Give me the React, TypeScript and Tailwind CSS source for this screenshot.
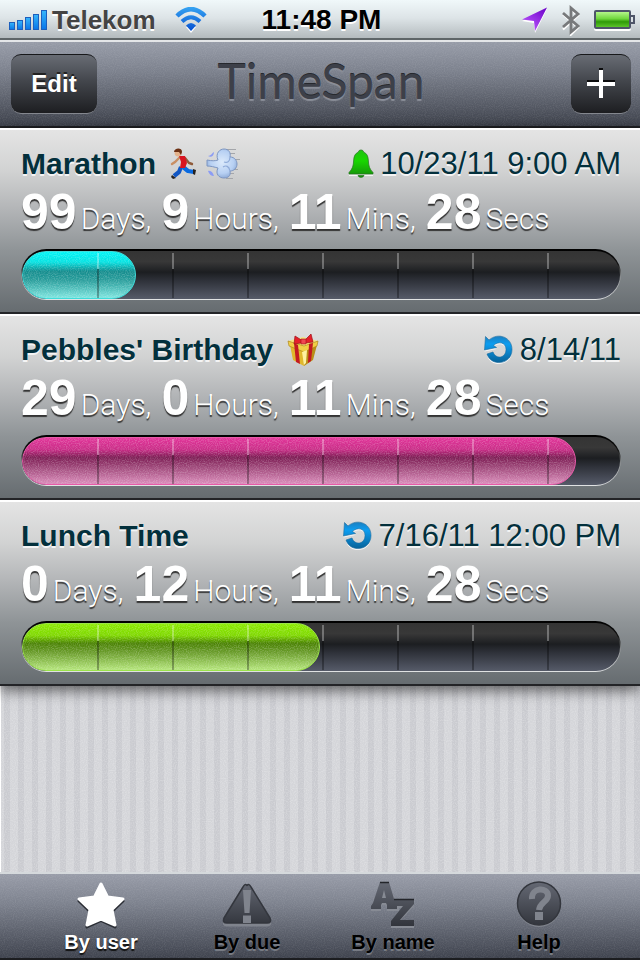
import { ReactNode } from "react";

type Unit = { value: number; label: string };

type Span = {
  title: string;
  emoji?: ReactNode;
  icon: ReactNode;
  date: string;
  units: Unit[];
  percent: number;
  fill: string;
};

const engraved = "[text-shadow:0_2px_0_#f4f4f4]";

function Grain({ id, className }: { id: string; className: string }) {
  return (
    <svg className={`pointer-events-none absolute inset-0 h-full w-full ${className}`} aria-hidden="true">
      <filter id={id} x="0" y="0" width="100%" height="100%">
        <feTurbulence type="fractalNoise" baseFrequency="0.9" numOctaves="1" />
        <feColorMatrix type="matrix" values="0 0 0 0 1  0 0 0 0 1  0 0 0 0 1  3 0 0 0 -1.2" />
      </filter>
      <rect width="100%" height="100%" filter={`url(#${id})`} />
    </svg>
  );
}

function Runner() {
  return (
    <svg width="28" height="32" viewBox="0 0 28 32" aria-label="runner">
      <path d="M10 9 L5 14 L2 16" stroke="#c98f63" strokeWidth="2.4" fill="none" strokeLinecap="round" />
      <path d="M15 10 L19 15 L22 16" stroke="#8f5b3a" strokeWidth="2.4" fill="none" strokeLinecap="round" />
      <path d="M11 19 L9 24 L4 28" stroke="#1257c4" strokeWidth="4.2" fill="none" strokeLinejoin="round" />
      <path d="M13 19 L18 23 L24 24" stroke="#0a6ae0" strokeWidth="4.2" fill="none" strokeLinejoin="round" />
      <path d="M2 27 L6 30 L3 31 L1 29 Z M23 21 L26 22 L25 27 L23 26 Z" fill="#26221f" />
      <path d="M9 8 L15 8 L17 15 L15 20 L10 20 L11 14 Z" fill="#d81420" />
      <circle cx="8" cy="5" r="3.4" fill="#e3b18a" />
      <path d="M4 4 C4 0 12 -1 12 4 L11 7 L9 4 Z" fill="#6b2f12" />
    </svg>
  );
}

function Dash() {
  return (
    <svg width="34" height="32" viewBox="0 0 34 32" aria-label="dash">
      <defs>
        <radialGradient id="cloud" cx="0.5" cy="0.45" r="0.6">
          <stop offset="0" stopColor="#dceafb" />
          <stop offset="0.65" stopColor="#b7d0f3" />
          <stop offset="1" stopColor="#86a3d0" />
        </radialGradient>
      </defs>
      <path d="M20 1.500 H30 M24 5.500 H29 M27 11.500 H34 M28 21.500 H32 M24 25.500 H28 M20 30.500 H27" stroke="#a4a6aa" strokeWidth="1" />
      <path d="M1 12 C6 13 9 13 12 12 C9 5 14 1 18 1 C23 1 25 5 24 9 C29 9 31 13 31 16 C31 20 28 23 24 23 C25 28 22 30 18 30 C13 30 9 26 12 20 C8 19 5 18 1 18 Z" fill="url(#cloud)" stroke="#7d96c2" strokeWidth="1" />
      <path d="M24 9 C24 14 21 15 18 14 M24 23 C23 18 20 17 17 19" stroke="#8fabd8" strokeWidth="1.2" fill="none" />
      <path d="M2 8 C5 8 6 5 8 4 C8 8 5 10 2 8 Z M2 23 C5 22 7 25 8 28 C5 28 3 26 2 23 Z" fill="#8b9cf4" />
    </svg>
  );
}

function Gift() {
  return (
    <svg width="32" height="34" viewBox="0 0 32 34" aria-label="gift">
      <path d="M3 12 L16 17 L17 33 L6 27 Z" fill="#e0b82c" />
      <path d="M17 17 L30 12 L26 27 L17 33 Z" fill="#b98e16" />
      <path d="M1 8 L16 4 L31 8 L17 16 Z" fill="#f7e680" />
      <path d="M1 8 L17 13 L31 8 L30 13 L17 19 L2 13 Z" fill="#f0cf45" stroke="#a67c12" strokeWidth="0.6" />
      <path d="M7 10 L11 12 L13 31 L9 29 Z M22 11 L26 10 L24 28 L21 30 Z" fill="#c31a22" />
      <path d="M15 19 L20 17 L19 30 L17 32 Z" fill="#fff1a0" />
      <path d="M16 8 L8 3 L7 11 L14 10 Z M17 8 L24 1 L26 9 L19 10 Z" fill="#e5202a" stroke="#9d0f18" strokeWidth="0.7" />
      <path d="M14 6 H19 V11 H14 Z" fill="#f04850" stroke="#9d0f18" strokeWidth="0.6" />
    </svg>
  );
}

function Bell() {
  return (
    <svg width="26" height="30" viewBox="0 0 26 30" aria-label="alarm">
      <defs>
        <linearGradient id="bell" x1="0" y1="0" x2="0" y2="1">
          <stop offset="0" stopColor="#1fc410" />
          <stop offset="0.4" stopColor="#19d600" />
          <stop offset="1" stopColor="#168a0c" />
        </linearGradient>
      </defs>
      <path d="M1 25.5 H25 V27 H16 Q13 31 10 27 H1 Z" fill="#f4f4f4" />
      <path d="M13 1 C14.500 1 15.500 1.800 15.700 3.200 C19 4.500 20 7 20.300 11 C20.600 17 21.500 20 25 23.500 V25 H1 V23.500 C4.500 20 5.400 17 5.700 11 C6 7 7 4.500 10.300 3.200 C10.500 1.800 11.500 1 13 1 Z M10 26.500 H16 C15.500 29 10.500 29 10 26.500 Z" fill="url(#bell)" stroke="#23731c" strokeWidth="0.7" />
    </svg>
  );
}

function Repeat({ id }: { id: string }) {
  const body =
    "M5 5 C14 -3 28 2 28 14.500 C28 30 7 32 3 19 L9 17 C12 25 22 23 22 14.500 C22 7 14 6 9.500 10.500 L12.500 12.500 L0.500 15 L1.500 1.500 Z";
  return (
    <svg width="30" height="30" viewBox="0 0 30 30" aria-label="repeats">
      <defs>
        <linearGradient id={id} x1="0" y1="0" x2="0" y2="1">
          <stop offset="0" stopColor="#1b7fc0" />
          <stop offset="0.3" stopColor="#0d9df0" />
          <stop offset="1" stopColor="#066299" />
        </linearGradient>
      </defs>
      <path d={body} transform="translate(0 1.5)" fill="#f6f6f6" />
      <path d={body} fill={`url(#${id})`} stroke="#1b6a9c" strokeWidth="0.6" />
    </svg>
  );
}

const spans: Span[] = [
  {
    title: "Marathon",
    emoji: (
      <>
        <Runner />
        <Dash />
      </>
    ),
    icon: <Bell />,
    date: "10/23/11 9:00 AM",
    units: [
      { value: 99, label: "Days," },
      { value: 9, label: "Hours," },
      { value: 11, label: "Mins," },
      { value: 28, label: "Secs" },
    ],
    percent: 19,
    fill: "border-[#3fdcda] bg-[linear-gradient(#00f6f6_0%,#06e2e2_22%,#138c8d_42%,#2b9f9d_62%,#7fe6e0_100%)]",
  },
  {
    title: "Pebbles' Birthday",
    emoji: <Gift />,
    icon: <Repeat id="repeat-birthday" />,
    date: "8/14/11",
    units: [
      { value: 29, label: "Days," },
      { value: 0, label: "Hours," },
      { value: 11, label: "Mins," },
      { value: 28, label: "Secs" },
    ],
    percent: 92.7,
    fill: "border-[#e75aa8] bg-[linear-gradient(#e2359a_0%,#c92d87_25%,#7d1d54_42%,#9c4577_62%,#db8dbb_100%)]",
  },
  {
    title: "Lunch Time",
    icon: <Repeat id="repeat-lunch" />,
    date: "7/16/11 12:00 PM",
    units: [
      { value: 0, label: "Days," },
      { value: 12, label: "Hours," },
      { value: 11, label: "Mins," },
      { value: 28, label: "Secs" },
    ],
    percent: 49.8,
    fill: "border-[#9be34a] bg-[linear-gradient(#8bea00_0%,#7fd800_25%,#4a8203_42%,#6b9d2c_62%,#b5e67c_100%)]",
  },
];

function ProgressBar({ name, percent, fill, id }: { name: string; percent: number; fill: string; id: string }) {
  return (
    <div
      role="progressbar"
      aria-label={name}
      aria-valuenow={percent}
      className="rounded-full bg-[linear-gradient(#000_0%,#111_30%,#8d9092_55%,#e2e4e5_100%)] px-px pt-[2px] pb-px"
    >
      <div className="relative h-12 overflow-hidden rounded-full bg-[linear-gradient(#343434_0%,#383838_22%,#1c1e21_44%,#2f323a_62%,#565b69_100%)]">
        <div className={`relative h-full overflow-hidden rounded-full border ${fill}`} style={{ width: `${percent}%` }}>
          <Grain id={id} className="opacity-20" />
        </div>
        <div className="absolute top-[2px] -right-1 bottom-px left-[2px] grid grid-cols-8">
          {[1, 2, 3, 4, 5, 6, 7].map((n) => (
            <div key={n} className="flex flex-col items-end">
              <div className="h-4 w-[2px] bg-white/30" />
              <div className="w-[2px] flex-1 bg-black/30" />
            </div>
          ))}
        </div>
      </div>
    </div>
  );
}

function SpanRow({ span, index }: { span: Span; index: number }) {
  return (
    <li className="border-t-2 border-b-2 border-t-white border-b-[#232427] bg-[linear-gradient(#e4e4e4_0%,#d2d3d3_22%,#b5b7b9_42%,#8f9497_66%,#666c70_100%)] pt-4 pr-[19px] pb-3 pl-[21px]">
      <div className="flex h-9 items-center text-[#03303c]">
        <h2 className={`text-[30px] leading-9 font-bold ${engraved}`}>{span.title}</h2>
        <div className="ml-[14px] flex items-center gap-2">{span.emoji}</div>
        <div className="ml-auto flex items-center gap-[6px]">
          {span.icon}
          <span className={`text-[31px] leading-9 ${engraved}`}>{span.date}</span>
        </div>
      </div>
      <div className="mt-px mb-2 flex h-[58px] items-baseline gap-[10px] text-white [text-shadow:0_2px_1px_#333]">
        {span.units.map((u) => (
          <span key={u.label} className="flex items-baseline gap-1">
            <b className="text-[50px] leading-[58px]">{u.value}</b>
            <span className="font-['Roboto','Liberation_Sans',sans-serif] text-[30px] font-light">{u.label}</span>
          </span>
        ))}
      </div>
      <ProgressBar name={span.title} percent={span.percent} fill={span.fill} id={`grain-${index}`} />
    </li>
  );
}

function StatusBar() {
  return (
    <div className="grid h-[42px] grid-cols-[1fr_auto_1fr] items-center border-b-2 border-[#e4e6e8] bg-[linear-gradient(#f0f8fa_0%,#dde4e7_45%,#b4bbbe_95%,#5f6668_96%,#5f6668_100%)] pr-[5px] pb-px pl-2">
      <div className="flex items-center gap-1">
        <svg width="40" height="24" viewBox="0 0 40 24" aria-label="signal">
          <defs>
            <linearGradient id="sig" x1="0" y1="0" x2="0" y2="1">
              <stop offset="0" stopColor="#37b6fb" />
              <stop offset="1" stopColor="#0875e8" />
            </linearGradient>
          </defs>
          <g fill="url(#sig)" stroke="#1d5fbd" strokeWidth="1">
            <rect x="1.500" y="14.500" width="5" height="7" />
            <rect x="9.500" y="12.500" width="5" height="9" />
            <rect x="17.500" y="9.500" width="5" height="12" />
            <rect x="25.500" y="6.500" width="5" height="15" />
            <rect x="33.500" y="2.500" width="5" height="19" />
          </g>
        </svg>
        <span className="text-[26px] leading-8 font-bold text-[#444] [text-shadow:0_2px_0_#fff]">Telekom</span>
        <svg className="ml-[14px]" width="34" height="26" viewBox="0 0 34 26" fill="none" aria-label="wifi">
          <defs>
            <linearGradient id="wifi" gradientUnits="userSpaceOnUse" x1="0" y1="0" x2="0" y2="24">
              <stop offset="0" stopColor="#36a4f2" />
              <stop offset="1" stopColor="#0650d0" />
            </linearGradient>
          </defs>
          <path d="M17 26 L12 20 H22 Z" fill="#fff" />
          <path d="M3 9 Q17 -5 31 9" stroke="url(#wifi)" strokeWidth="4.500" />
          <path d="M8 14.500 Q17 6 26 14.500" stroke="url(#wifi)" strokeWidth="4" />
          <path d="M12 18.500 Q17 13.500 22 18.500 L17 24 Z" fill="url(#wifi)" />
        </svg>
      </div>
      <time className="text-[28px] leading-8 font-bold text-black [text-shadow:0_2px_0_#fff]">11:48 PM</time>
      <div className="flex items-center justify-end">
        <svg className="mr-3" width="28" height="28" viewBox="0 0 28 28" aria-label="location">
          <defs>
            <linearGradient id="loc" x1="1" y1="0" x2="0.200" y2="1">
              <stop offset="0" stopColor="#6a00c8" />
              <stop offset="1" stopColor="#c05cff" />
            </linearGradient>
          </defs>
          <path d="M26 3 L14 27 L13 17 L1 15 Z" fill="#fff" />
          <path d="M26 1.500 L14 25 L13 15 L1 13.500 Z" fill="url(#loc)" />
        </svg>
        <svg className="mr-3" width="20" height="32" viewBox="0 0 20 32" fill="none" aria-label="bluetooth">
          <path d="M2 9 L17 22 L10 29 V4 L17 10 L2 24" transform="translate(0 1.500)" stroke="#fff" strokeWidth="2.200" />
          <path d="M2 9 L17 22 L10 28 V4 L17 10 L2 23" stroke="#77797b" strokeWidth="2.800" />
        </svg>
        <svg width="42" height="24" viewBox="0 0 42 24" aria-label="battery">
          <defs>
            <linearGradient id="bat" x1="0" y1="0" x2="0" y2="1">
              <stop offset="0" stopColor="#b4f58a" />
              <stop offset="0.450" stopColor="#6fd63c" />
              <stop offset="0.650" stopColor="#2f9a08" />
              <stop offset="1" stopColor="#5cc42a" />
            </linearGradient>
          </defs>
          <rect x="1" y="4" width="37" height="19" rx="2" fill="#fff" />
          <rect x="1" y="2" width="37" height="19" rx="2" fill="#4e5568" />
          <rect x="3" y="4" width="33" height="15" fill="url(#bat)" />
          <path d="M38 8 H41 V15 H38" fill="none" stroke="#4e5568" strokeWidth="2" />
        </svg>
      </div>
    </div>
  );
}

const keyStyle =
  "relative flex h-[60px] items-center justify-center rounded-[10px] border-t border-b border-t-[#17181a] border-b-[#85888f] bg-[linear-gradient(#686c74_0%,#43464c_45%,#1d1e21_100%)] text-white";

function Header() {
  return (
    <header className="relative grid h-[86px] grid-cols-[1fr_auto_1fr] items-center border-b-2 border-[#1f2023] bg-[linear-gradient(#979ca8_0%,#7c818d_35%,#3e424c_100%)] pr-[9px] pl-[11px]">
      <Grain id="grain-header" className="opacity-[0.07]" />
      <button type="button" className={`${keyStyle} w-[86px] text-2xl font-bold [text-shadow:0_-2px_0_#222]`}>
        Edit
      </button>
      <h1 className="relative pb-[6px] font-['Lato',sans-serif] text-[48px] leading-[60px] text-[#3d4049] [text-shadow:0_2px_1px_#8b8f99,0_-1px_0_#26282d]">
        TimeSpan
      </h1>
      <button type="button" aria-label="Add" className={`${keyStyle} w-[60px] justify-self-end`}>
        <svg width="30" height="32" viewBox="0 0 30 32" aria-hidden="true">
          <path d="M1 14 H29 M15 0 V28" stroke="#0d0d0e" strokeWidth="4" />
          <path d="M1 16 H29 M15 2 V30" stroke="#fff" strokeWidth="4" />
        </svg>
      </button>
    </header>
  );
}

function TabGradient({ id }: { id: string }) {
  return (
    <linearGradient id={id} gradientUnits="userSpaceOnUse" x1="0" y1="0" x2="0" y2="48">
      <stop offset="0" stopColor="#666a75" />
      <stop offset="1" stopColor="#2e3138" />
    </linearGradient>
  );
}

const tabs = [
  {
    label: "By user",
    icon: (
      <svg width="50" height="48" viewBox="0 0 50 48" aria-hidden="true">
        <g strokeWidth="3" strokeLinejoin="round">
          <path d="M25 5 L31.500 18 L47 20 L36 30.500 L39 46 L25 39.500 L11 46 L14 30.500 L3 20 L18.500 18 Z" fill="#2b2e35" stroke="#2b2e35" />
          <path d="M25 3 L31.500 16 L47 18 L36 28.500 L39 44 L25 38 L11 44 L14 28.500 L3 18 L18.500 16 Z" fill="#fff" stroke="#fff" />
        </g>
      </svg>
    ),
  },
  {
    label: "By due",
    icon: (
      <svg width="52" height="48" viewBox="0 0 52 48" aria-hidden="true">
        <defs><TabGradient id="tab-due" /></defs>
        <path d="M26 6 L48 40 Q50 44 46 44 H6 Q2 44 4 40 Z" fill="#80848d" stroke="#80848d" strokeWidth="3" strokeLinejoin="round" />
        <path d="M26 4.500 Q28 2 30 6 L49 37 Q51 42 46 42 H6 Q1 42 3 37 L22 6 Q24 2 26 4.500 Z" fill="url(#tab-due)" stroke="#33363d" strokeWidth="1.500" strokeLinejoin="round" />
        <path d="M22 9 H30 L28.500 32 H23.500 Z M22 34.500 H30 V42 H22 Z" fill="#80848d" />
      </svg>
    ),
  },
  {
    label: "By name",
    icon: (
      <svg width="46" height="48" viewBox="0 0 46 48" aria-hidden="true">
        <defs><TabGradient id="tab-name" /></defs>
        <path transform="translate(0 2)" fill="#878b94" d="M10 1 H19 L27 23 H29 V28 H17 V24 L16 22 H12 L11 24 V28 H1 V24 L2 23 Z M22 18 H44 V23 L30 38 H44 V45 H21 V40 L35 25 H22 Z" />
        <path fill="url(#tab-name)" fillRule="evenodd" d="M10 1 H19 L24 18 H44 V23 L30 39 H44 V45 H21 V40 L33 25 H27 V28 H17 V24 L16 22 H12 L11 24 V28 H1 V25 L3 22 Z M14 9 L12 17 H16 Z" />
        <path d="M10 1.500 H19 M24 18.500 H44" stroke="#23252a" strokeWidth="1.500" />
      </svg>
    ),
  },
  {
    label: "Help",
    icon: (
      <svg width="48" height="48" viewBox="0 0 48 48" aria-hidden="true">
        <defs><TabGradient id="tab-help" /></defs>
        <circle cx="24" cy="24" r="22" fill="#80848d" />
        <circle cx="24" cy="22.500" r="21.500" fill="url(#tab-help)" stroke="#33363d" strokeWidth="1.500" />
        <path d="M17 18 C16 6 33 6 33 14.500 C33 21 25 21 24 29" fill="none" stroke="#80848d" strokeWidth="6" />
        <rect x="20" y="31" width="8" height="8" fill="#80848d" />
      </svg>
    ),
  },
];

function TabBar() {
  return (
    <nav className="relative flex h-[88px] border-t-2 border-b-2 border-t-[#d5d9dc] border-b-[#1c1d20] bg-[linear-gradient(#989ca8_0%,#7d828e_35%,#3f434e_100%)] px-7">
      <Grain id="grain-tabs" className="opacity-[0.07]" />
      {tabs.map((tab, i) => (
        <button
          key={tab.label}
          type="button"
          aria-current={i === 0 ? "page" : undefined}
          className={`relative flex flex-1 flex-col items-center gap-px pt-[7px] text-xl leading-6 font-bold ${
            i === 0 ? "text-white [text-shadow:0_2px_1px_#111]" : "text-black [text-shadow:0_2px_0_#777b84]"
          }`}
        >
          {tab.icon}
          {tab.label}
        </button>
      ))}
    </nav>
  );
}

export default function App() {
  return (
    <div className="flex min-h-screen flex-col bg-black font-['Liberation_Sans',Arial,sans-serif]">
      <StatusBar />
      <Header />
      <main className="flex flex-1 flex-col">
        <ul className="relative z-10 shadow-[0_4px_14px_rgba(0,0,0,0.6)]">
          {spans.map((span, i) => (
            <SpanRow key={span.title} span={span} index={i} />
          ))}
        </ul>
        <div className="relative flex-1 border-l border-white bg-[repeating-linear-gradient(90deg,#d4d5d9_0px,#d4d5d9_3px,#cacbd0_3px,#cacbd0_9px,#d4d5d9_9px,#d4d5d9_14px)]">
          <Grain id="grain-backdrop" className="opacity-20" />
        </div>
      </main>
      <TabBar />
    </div>
  );
}
